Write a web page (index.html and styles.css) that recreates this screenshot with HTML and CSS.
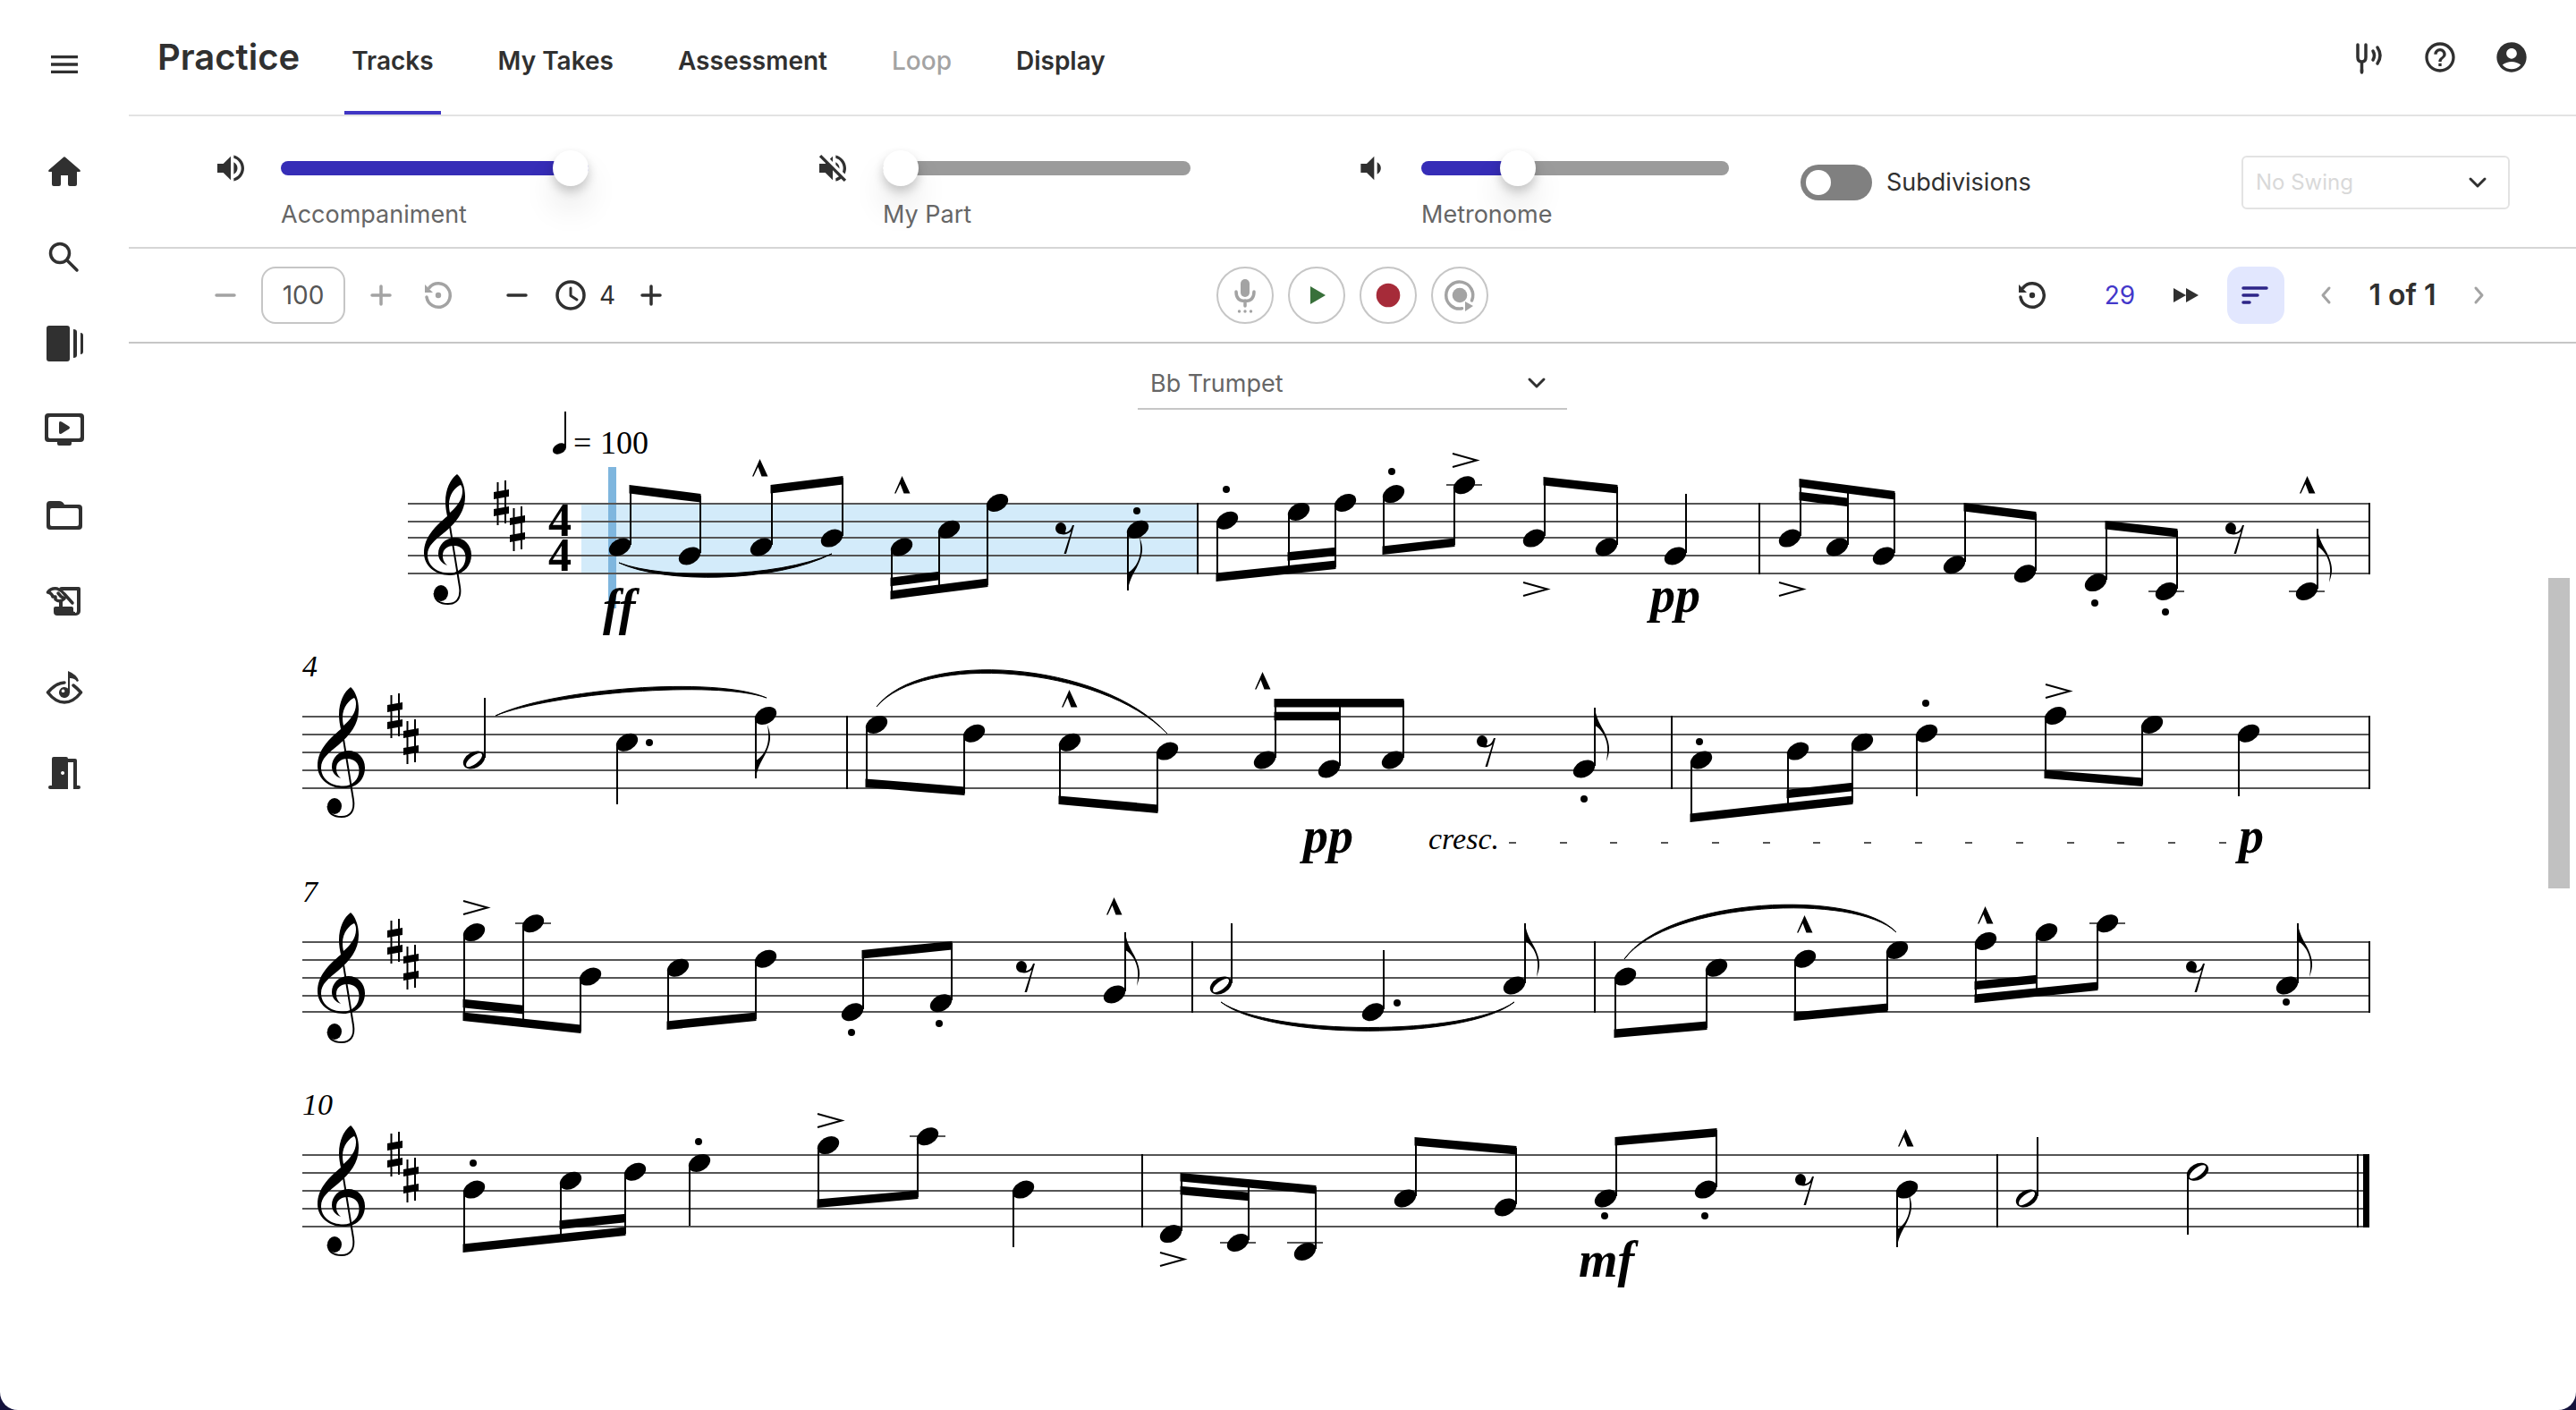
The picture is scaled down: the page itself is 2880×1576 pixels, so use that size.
FILE: index.html
```html
<!DOCTYPE html>
<html lang="en">
<head>
    <meta charset="UTF-8">
    <meta name="viewport" content="width=device-width, initial-scale=1.0">
    <title>Practice</title>
    <link rel="stylesheet" href="styles.css">
</head>
<body>
    <div class="app">
        <aside class="sidebar">
            <button class="icon-btn menu-btn" aria-label="Menu">
                <svg class="icon" viewBox="0 0 24 24"><path d="M3 18h18v-2H3v2zm0-5h18v-2H3v2zm0-7v2h18V6H3z"/></svg>
            </button>
            <nav class="side-nav">
                <a href="#" aria-label="Home">
                    <svg viewBox="0 0 48 48"><path d="M22.700 8Q24 6.500 25.300 8L41.500 22Q42.500 24 40.500 24H38V38Q38 40 36 40H30Q28 40 28 38V28H20V38Q20 40 18 40H12Q10 40 10 38V24H7.500Q5.500 24 6.500 22Z"/></svg>
                </a>
                <a href="#" aria-label="Search">
                    <svg viewBox="0 0 48 48" class="line"><circle cx="19" cy="19" r="10.500"/><path d="M27 27L38 38"/></svg>
                </a>
                <a href="#" aria-label="Library">
                    <svg viewBox="0 0 48 48"><rect x="4" y="4" width="26" height="40" rx="3"/><path d="M34 8q4 0 4 3v26q0 3-4 3zM42 12q3 0 3 3v18q0 3-3 3z"/></svg>
                </a>
                <a href="#" aria-label="Videos">
                    <svg viewBox="0 0 48 48"><path fill-rule="evenodd" d="M6 6H42a4 4 0 0 1 4 4V34a4 4 0 0 1-4 4H32v2a2 2 0 0 1-2 2H18a2 2 0 0 1-2-2V38H6a4 4 0 0 1-4-4V10a4 4 0 0 1 4-4zM8 10a2 2 0 0 0-2 2V32a2 2 0 0 0 2 2H40a2 2 0 0 0 2-2V12a2 2 0 0 0-2-2z"/><path d="M18 17Q18 14 21 15.500L29 20.500Q31 22 29 23.500L21 28.500Q18 30 18 27Z"/></svg>
                </a>
                <a href="#" aria-label="Folders">
                    <svg viewBox="0 0 48 48"><path fill-rule="evenodd" d="M8 8H18Q22 8 24 12H40a4 4 0 0 1 4 4V36a4 4 0 0 1-4 4H8a4 4 0 0 1-4-4V12a4 4 0 0 1 4-4zM10 16a2 2 0 0 0-2 2V34a2 2 0 0 0 2 2H38a2 2 0 0 0 2-2V18a2 2 0 0 0-2-2z"/></svg>
                </a>
                <a href="#" aria-label="Compose">
                    <svg viewBox="0 0 48 48"><path d="M14 30H32a2 2 0 0 1 2 2v3q0 1 2 1v4H16a4 4 0 0 1-4-4v-4a2 2 0 0 1 2-2zM18 22h4v9h-4zM18 11q0-3 3-3H40a2 2 0 0 1 2 2V35a5 5 0 0 1-5 5h-3v-3q4 1 4-2V12H22z"/><path class="line" stroke-width="3" d="M5.500 14Q9 9 16 10Q21 12 24 16L33 26M5.500 14Q10 15 11 19H14V22Q19 26 24 21L20 18.500L17 15"/></svg>
                </a>
                <a href="#" aria-label="Sight reading">
                    <svg viewBox="0 0 48 48"><path class="line" stroke-width="3" d="M24 19Q15 19 5.500 30Q14 41 24 41T42.500 30Q38 25 34 22"/><path fill-rule="evenodd" d="M28 6Q38 10 40 17L38 18Q36 14 30 14V30a6 6 0 1 1-2-4.500zM22.500 26.500a1.800 1.800 0 1 0 .1 0z"/></svg>
                </a>
                <a href="#" aria-label="Leave room">
                    <svg viewBox="0 0 48 48"><path fill-rule="evenodd" d="M12 6H26a2 2 0 0 1 2 2H36a2 2 0 0 1 2 2V38H40a2 2 0 0 1 0 4H34V12H28V42H8a2 2 0 0 1 0-4H10V8a2 2 0 0 1 2-2zM22 22a2 2 0 1 0 .1 0z"/></svg>
                </a>
            </nav>
        </aside>

        <main class="main">
            <header class="header">
                <h1>Practice</h1>
                <nav class="tabs">
                    <button class="tab active">Tracks</button>
                    <button class="tab">My Takes</button>
                    <button class="tab">Assessment</button>
                    <button class="tab" disabled>Loop</button>
                    <button class="tab">Display</button>
                </nav>
                <div class="header-actions">
                    <button class="icon-btn" aria-label="Tuner">
                        <svg class="icon" viewBox="0 0 40 40"><path class="line" stroke-width="3.500" d="M8 6V20Q8 25 12.500 25T17 20V6M12.500 26V37"/><path class="line" stroke-width="5" d="M12.500 34V36"/><path class="line" stroke-width="3" d="M25 13Q28 18 25 23M30 9Q36 18 30 27"/></svg>
                    </button>
                    <button class="icon-btn" aria-label="Help">
                        <svg class="icon" viewBox="0 0 24 24"><path d="M11 18h2v-2h-2v2zm1-16C6.480 2 2 6.480 2 12s4.480 10 10 10 10-4.480 10-10S17.520 2 12 2zm0 18c-4.410 0-8-3.590-8-8s3.590-8 8-8 8 3.590 8 8-3.590 8-8 8zm0-14c-2.210 0-4 1.790-4 4h2c0-1.100.9-2 2-2s2 .9 2 2c0 2-3 1.750-3 5h2c0-2.250 3-2.500 3-5 0-2.210-1.790-4-4-4z"/></svg>
                    </button>
                    <button class="icon-btn" aria-label="Account">
                        <svg class="icon" viewBox="0 0 24 24"><path d="M12 2C6.480 2 2 6.480 2 12s4.480 10 10 10 10-4.480 10-10S17.520 2 12 2zm0 4c1.930 0 3.500 1.570 3.500 3.500S13.930 13 12 13s-3.500-1.570-3.500-3.500S10.070 6 12 6zm0 14c-2.030 0-4.430-.82-6.140-2.880C7.550 15.800 9.680 15 12 15s4.450.8 6.140 2.120C16.430 19.180 14.030 20 12 20z"/></svg>
                    </button>
                </div>
            </header>

            <section class="mixer">
                <div class="track">
                    <svg class="icon" viewBox="0 0 24 24"><path d="M3 9v6h4l5 5V4L7 9H3zm13.500 3c0-1.770-1.020-3.290-2.500-4.030v8.050c1.480-.73 2.500-2.250 2.500-4.020zM14 3.230v2.060c2.890.86 5 3.540 5 6.710s-2.110 5.850-5 6.710v2.060c4.010-.91 7-4.490 7-8.770s-2.990-7.860-7-8.770z"/></svg>
                    <input type="range" id="accompaniment" min="0" max="100" value="100" style="--fill: 100%">
                    <label for="accompaniment">Accompaniment</label>
                </div>
                <div class="track">
                    <svg class="icon" viewBox="0 0 24 24"><path d="M4.340 2.930 2.930 4.340 7.290 8.700 7 9H3v6h4l5 5v-6.590l4.180 4.180c-.65.49-1.380.88-2.180 1.110v2.060c1.340-.3 2.570-.92 3.610-1.750l2.050 2.050 1.410-1.410L4.340 2.930zM19 12c0 .82-.15 1.610-.41 2.340l1.530 1.530c.56-1.170.88-2.480.88-3.870 0-4.280-2.990-7.860-7-8.770v2.060c2.890.86 5 3.540 5 6.710zm-7-8-1.880 1.880L12 7.760V4zm4.500 8c0-1.770-1.020-3.290-2.500-4.030v1.790l2.480 2.480c.01-.08.02-.16.02-.24z"/></svg>
                    <input type="range" id="my-part" min="0" max="100" value="0" style="--fill: 0%">
                    <label for="my-part">My Part</label>
                </div>
                <div class="track">
                    <svg class="icon" viewBox="0 0 24 24"><path d="M18.500 12c0-1.770-1.020-3.290-2.500-4.030v8.050c1.480-.73 2.500-2.250 2.500-4.020zM5 9v6h4l5 5V4L9 9H5z"/></svg>
                    <input type="range" id="metronome" min="0" max="100" value="29" style="--fill: 29%">
                    <label for="metronome">Metronome</label>
                </div>
                <div class="mixer-end">
                    <label class="switch">
                        <input type="checkbox">
                        Subdivisions
                    </label>
                    <div class="select-wrap swing">
                        <select aria-label="Swing" disabled>
                            <option>No Swing</option>
                        </select>
                        <svg class="chevron" viewBox="0 0 24 24"><path d="M4 8L12 16L20 8"/></svg>
                    </div>
                </div>
            </section>

            <section class="toolbar">
                <div class="tempo">
                    <button class="icon-btn muted" aria-label="Slower"><svg class="icon line" viewBox="0 0 40 40"><path d="M10 20H30"/></svg></button>
                    <input type="text" class="bpm" value="100" aria-label="Tempo">
                    <button class="icon-btn muted" aria-label="Faster"><svg class="icon line" viewBox="0 0 40 40"><path d="M10 20H30M20 10V30"/></svg></button>
                    <button class="icon-btn muted reset" aria-label="Reset tempo">
                        <svg class="icon" viewBox="0 0 40 40"><path class="line" d="M7 22A13.200 13.200 0 1 0 10 11.500"/><path d="M5 8V17H14Z"/><circle cx="20" cy="20" r="3.200"/></svg>
                    </button>
                    <div class="count-in">
                        <button class="icon-btn" aria-label="Less count-in"><svg class="icon line" viewBox="0 0 40 40"><path d="M10 20H30"/></svg></button>
                        <span class="count">
                            <svg class="icon line" viewBox="0 0 40 40"><circle cx="20" cy="20" r="15"/><path d="M20 12V20.500L27 25" stroke-width="3"/></svg>
                            4
                        </span>
                        <button class="icon-btn" aria-label="More count-in"><svg class="icon line" viewBox="0 0 40 40"><path d="M10 20H30M20 10V30"/></svg></button>
                    </div>
                </div>

                <div class="transport">
                    <button class="round muted" aria-label="Microphone">
                        <svg viewBox="0 0 64 64"><rect x="27" y="14" width="10" height="20" rx="5"/><path class="line" stroke-width="3" stroke-linecap="butt" d="M22 28Q22 38.500 32 38.500T42 28M32 38V44"/><circle cx="25.500" cy="50" r="1.700"/><circle cx="32" cy="50" r="1.700"/><circle cx="38.500" cy="50" r="1.700"/></svg>
                    </button>
                    <button class="round play" aria-label="Play">
                        <svg viewBox="0 0 64 64"><path d="M25 22V42L42 32Z"/></svg>
                    </button>
                    <button class="round record" aria-label="Record">
                        <svg viewBox="0 0 64 64"><circle cx="32" cy="32" r="13.300"/></svg>
                    </button>
                    <button class="round muted" aria-label="Play with recording">
                        <svg viewBox="0 0 64 64"><circle cx="32" cy="32" r="8.300"/><path class="line" stroke-width="3.500" stroke-linecap="butt" d="M45.500 38A15 15 0 1 0 34.500 46.800"/><path d="M38 39V50L47 44Z"/></svg>
                    </button>
                </div>

                <div class="position">
                    <button class="icon-btn restart" aria-label="Restart">
                        <svg class="icon" viewBox="0 0 40 40"><path class="line" d="M7 22A13.200 13.200 0 1 0 10 11.500"/><path d="M5 8V17H14Z"/><circle cx="20" cy="20" r="3.200"/></svg>
                    </button>
                    <span class="measure">29</span>
                    <button class="icon-btn" aria-label="Skip ahead">
                        <svg class="icon" viewBox="0 0 40 40"><path d="M6 12V28L20 20ZM20 12V28L34 20Z"/></svg>
                    </button>
                    <button class="view-btn" aria-label="Follow mode">
                        <svg class="icon line" viewBox="0 0 40 40"><path d="M6 12H32M6 20H22M6 28H13"/></svg>
                    </button>
                    <button class="icon-btn muted" aria-label="Previous page"><svg class="icon line" viewBox="0 0 40 40"><path stroke-width="3" d="M24 12L17 20L24 28"/></svg></button>
                    <span class="pages">1 of 1</span>
                    <button class="icon-btn muted" aria-label="Next page"><svg class="icon line" viewBox="0 0 40 40"><path stroke-width="3" d="M16 12L23 20L16 28"/></svg></button>
                </div>
            </section>

            <section class="sheet">
                <div class="select-wrap instrument">
                    <select aria-label="Instrument">
                        <option>Bb Trumpet</option>
                    </select>
                    <svg class="chevron" viewBox="0 0 24 24"><path d="M4 8L12 16L20 8"/></svg>
                </div>
                <svg class="score" id="score" viewBox="144 458 2736 1100"></svg>
            </section>
            <div class="scroll-thumb"></div>
        </main>
    </div>

    <script src="score.js"></script>
</body>
</html>
```

FILE: styles.css
```css
* {
    box-sizing: border-box;
}

body {
    margin: 0;
    background: #14123c;
    color: #303030;
    font-family: Inter, "Liberation Sans", sans-serif;
    font-size: 28px;
    line-height: 36px;
}

button,
input,
select {
    font: inherit;
    color: inherit;
}

button {
    padding: 0;
    border: none;
    background: none;
    cursor: pointer;
}

svg {
    display: block;
    fill: currentColor;
}

.icon {
    width: 40px;
    height: 40px;
    flex: none;
}

.line {
    fill: none;
    stroke: currentColor;
    stroke-width: 3.5px;
    stroke-linecap: round;
    stroke-linejoin: round;
}

.muted {
    color: #a3a3a3;
}

.app {
    display: flex;
    min-height: 100vh;
    background: #fff;
    border-radius: 0 0 20px 20px;
    overflow: hidden;
}

/* sidebar */

.sidebar {
    width: 144px;
    flex: none;
}

.menu-btn {
    display: flex;
    width: 100%;
    height: 144px;
    align-items: center;
    justify-content: center;
}

.side-nav a {
    display: flex;
    height: 96px;
    align-items: center;
    justify-content: center;
    color: inherit;
}

.side-nav svg {
    width: 48px;
    height: 48px;
}

.main {
    position: relative;
    flex: 1;
    min-width: 0;
}

/* header */

.header {
    display: flex;
    height: 130px;
    padding: 0 52px 0 32px;
    border-bottom: 2px solid #e3e3e3;
    align-items: center;
}

.header h1 {
    margin: 0 50px 0 0;
    font-size: 40px;
    line-height: 48px;
    font-weight: 600;
}

.tabs {
    display: flex;
    height: 100%;
    gap: 56px;
}

.tab {
    padding: 12px 8px 0;
    border-bottom: 4px solid transparent;
    font-weight: 600;
}

.tab.active {
    border-bottom-color: #4036c4;
}

.tab:disabled {
    color: #a3a3a3;
    font-weight: 500;
}

.header-actions {
    display: flex;
    gap: 40px;
    margin-left: auto;
}

/* mixer */

.mixer {
    display: grid;
    grid-template-columns: 673fr 602fr 500fr 793fr;
    height: 148px;
    padding: 0 74px 0 94px;
    border-bottom: 2px solid #d6d6d6;
    align-items: center;
}

.track {
    display: grid;
    grid-template-columns: 40px 344px;
    column-gap: 36px;
    row-gap: 14px;
    padding-top: 20px;
}

.track label {
    grid-column: 2;
    font-size: 27px;
    color: #666;
}

input[type="range"] {
    appearance: none;
    width: 100%;
    height: 40px;
    margin: 0;
    background: none;
}

input[type="range"]::-webkit-slider-runnable-track {
    height: 16px;
    border-radius: 8px;
    background: linear-gradient(to right, #362db7 var(--fill), #9b9b9b var(--fill));
}

input[type="range"]::-webkit-slider-thumb {
    appearance: none;
    width: 40px;
    height: 40px;
    margin-top: -12px;
    border-radius: 50%;
    background: #fff;
    box-shadow: 0 6px 12px rgba(0, 0, 0, 0.2), 0 24px 36px rgba(0, 0, 0, 0.1);
}

.mixer-end {
    display: flex;
    padding-top: 2px;
    align-items: center;
    justify-content: space-between;
}

.switch {
    display: flex;
    align-items: center;
    gap: 16px;
    font-size: 27px;
}

.switch input {
    appearance: none;
    width: 80px;
    height: 40px;
    margin: 0;
    padding: 6px;
    border-radius: 20px;
    background: #808080;
}

.switch input::before {
    content: "";
    display: block;
    width: 28px;
    height: 28px;
    border-radius: 50%;
    background: #fff;
}

.switch input:checked {
    background: #362db7;
}

.select-wrap {
    position: relative;
}

.select-wrap select {
    appearance: none;
    width: 100%;
    height: 60px;
    padding: 0 14px;
    border: none;
    background: none;
    opacity: 1;
}

.chevron {
    position: absolute;
    top: 18px;
    right: 22px;
    width: 24px;
    height: 24px;
    pointer-events: none;
}

.chevron path {
    fill: none;
    stroke: #303030;
    stroke-width: 3px;
    stroke-linecap: round;
    stroke-linejoin: round;
}

.swing {
    width: 300px;
}

.swing .chevron {
    right: 24px;
}

.swing select {
    border: 2px solid #e3e3e3;
    border-radius: 6px;
    font-size: 24px;
    color: #d9d9d9;
}

/* toolbar */

.toolbar {
    display: grid;
    grid-template-columns: 1fr auto 1fr;
    height: 106px;
    padding: 0 88px;
    border-bottom: 2px solid #c6c6c6;
    align-items: center;
}

.tempo,
.count-in,
.count,
.position {
    display: flex;
    align-items: center;
}

.tempo,
.count-in {
    gap: 20px;
}

.reset {
    margin-left: 4px;
}

.count-in {
    margin-left: 28px;
}

.count {
    gap: 12px;
}

.bpm {
    width: 94px;
    height: 64px;
    padding: 0;
    border: 2px solid #c6c6c6;
    border-radius: 16px;
    text-align: center;
    color: #555;
}

.transport {
    display: flex;
    gap: 16px;
}

.round {
    width: 64px;
    height: 64px;
    border: 2px solid #c6c6c6;
    border-radius: 50%;
}

.round svg {
    width: 64px;
    height: 64px;
    margin: -2px;
}

.play {
    color: #38703a;
}

.record {
    color: #a62b39;
}

.position {
    gap: 26px;
    justify-content: flex-end;
}

.restart {
    margin-right: 24px;
}

.measure {
    width: 56px;
    text-align: center;
    color: #4338ca;
}

.view-btn {
    width: 64px;
    height: 64px;
    padding: 12px;
    border-radius: 16px;
    background: #e2e7fe;
    color: #2d2588;
}

.pages {
    width: 80px;
    text-align: center;
    white-space: nowrap;
    font-size: 32px;
    font-weight: 600;
}

/* sheet music */

.sheet {
    padding-top: 14px;
}

.instrument {
    width: 480px;
    margin: 0 auto;
}

.instrument select {
    padding-top: 4px;
    border-bottom: 2px solid #c6c6c6;
    font-size: 27px;
    color: #666;
}

.score {
    width: 100%;
    height: auto;
    fill: #000;
    font-family: "Liberation Serif", "Times New Roman", serif;
}

.score .staff-line {
    fill: #555;
    shape-rendering: crispEdges;
}

.score .stem {
    shape-rendering: crispEdges;
}

.score .stroke {
    fill: none;
    stroke: #000;
    stroke-width: 2px;
}

.score .slur {
    stroke: #000;
    stroke-width: 1px;
    stroke-linejoin: round;
}

.score .current {
    fill: #d3ebfa;
}

.score .playhead {
    fill: #7fb6de;
}

.score .time {
    font-size: 52px;
    font-weight: bold;
}

.score .mark {
    font-size: 36px;
}

.score .number {
    font-size: 34px;
    font-style: italic;
}

.score .dynamic {
    font-size: 56px;
    font-style: italic;
    font-weight: bold;
}

.scroll-thumb {
    position: absolute;
    top: 646px;
    right: 7px;
    width: 24px;
    height: 347px;
    background: #c1c1c1;
}
```

FILE: score.js
```javascript
// Steps count down from the top staff line: 0 = F5, 4 = B4, 8 = E4
const STEP = 9.9;
const HEAD = 11.5;

const systems = [
    {
        lines: [563, 583, 601, 621, 641], x: 456, clef: 474, bars: [1339, 1967, 2649],
        beams: [
            { up: true, y: [542, 552], notes: [[693, 5], [771, 6]] },
            { up: true, y: [542, 532], notes: [[851, 5], [930, 4]] },
            { y: [670, 656], notes: [[1008, 5], [1061, 3], [1115, 0]], sub: [0, 1] },
            { y: [650, 636], notes: [[1372, 2], [1452, 1], [1504, 0]], sub: [1, 2] },
            { y: [620, 611], notes: [[1558, -1], [1637, -2]] },
            { up: true, y: [533, 542], notes: [[1715, 4], [1796, 5]] },
            { up: true, y: [535, 549], notes: [[2001, 4], [2054, 5], [2106, 6]], sub: [0, 1] },
            { up: true, y: [562, 572], notes: [[2185, 7], [2264, 8]] },
            { up: true, y: [582, 591], notes: [[2343, 9], [2422, 10]] }
        ],
        notes: [
            { x: 1272, s: 3, end: 660, flag: true },
            { x: 1873, s: 6, end: 552, up: true },
            { x: 2579, s: 10, end: 591, up: true, flag: true }
        ],
        rests: [1180, 2488],
        dots: [[1271, 571], [1371, 547], [1556, 527], [2342, 674], [2421, 684]],
        accents: [[1624, 507], [1703, 651], [1989, 651]],
        marcatos: [[841, 513], [1000, 532], [2571, 532]],
        slurs: [[692, 629, 742, 653, 868, 651, 930, 619]],
        dynamics: [["ff", 674, 698], ["pp", 1845, 684]]
    },
    {
        lines: [801, 821, 841, 861, 881], x: 338, clef: 355, number: 4, bars: [947, 1869, 2649],
        beams: [
            { y: [880, 889], notes: [[980, 1], [1089, 2]] },
            { y: [899, 909], notes: [[1196, 3], [1305, 4]] },
            { up: true, y: [781, 781], notes: [[1414, 5], [1486, 6], [1557, 5]], sub: [0, 1] },
            { y: [919, 899], notes: [[1902, 5], [2010, 4], [2082, 3]], sub: [1, 2] },
            { y: [870, 879], notes: [[2298, 0], [2406, 1]] }
        ],
        notes: [
            { x: 530, s: 5, end: 780, up: true, half: true },
            { x: 701, s: 3, end: 899 },
            { x: 856, s: 0, end: 870, flag: true },
            { x: 1771, s: 6, end: 791, up: true, flag: true },
            { x: 2154, s: 2, end: 890 },
            { x: 2514, s: 2, end: 890 }
        ],
        rests: [1651],
        dots: [[726, 830], [1771, 893], [1900, 829], [2153, 786]],
        accents: [[2287, 765]],
        marcatos: [[1187, 771], [1403, 751]],
        slurs: [[554, 800, 615, 770, 800, 755, 857, 780], [980, 790, 1030, 725, 1230, 738, 1305, 820]],
        dynamics: [["pp", 1457, 953], ["p", 2503, 953]]
    },
    {
        lines: [1053, 1073, 1093, 1113, 1131], x: 338, clef: 355, number: 7, bars: [1333, 1783, 2649],
        beams: [
            { y: [1141, 1155], notes: [[530, -1], [596, -2], [660, 4]], sub: [0, 1] },
            { y: [1151, 1141], notes: [[758, 3], [856, 2]] },
            { up: true, y: [1062, 1052], notes: [[953, 8], [1052, 7]] },
            { y: [1160, 1151], notes: [[1817, 4], [1919, 3]] },
            { y: [1141, 1131], notes: [[2018, 2], [2121, 1]] },
            { y: [1121, 1107], notes: [[2220, 0], [2288, -1], [2356, -2]], sub: [0, 1] }
        ],
        notes: [
            { x: 1246, s: 6, end: 1042, up: true, flag: true },
            { x: 1365, s: 5, end: 1032, up: true, half: true },
            { x: 1535, s: 8, end: 1062, up: true },
            { x: 1693, s: 5, end: 1032, up: true, flag: true },
            { x: 2557, s: 5, end: 1032, up: true, flag: true }
        ],
        rests: [1136, 2444],
        dots: [[952, 1154], [1050, 1144], [1562, 1121], [2556, 1120]],
        accents: [[518, 1007]],
        marcatos: [[1237, 1003], [2009, 1023], [2211, 1013]],
        slurs: [[1365, 1120, 1420, 1163, 1640, 1163, 1693, 1120], [1816, 1072, 1865, 1002, 2075, 993, 2120, 1042]],
        dynamics: []
    },
    {
        lines: [1291, 1311, 1331, 1351, 1371], x: 338, clef: 355, number: 10, bars: [1277, 2233, 2636],
        beams: [
            { y: [1400, 1381], notes: [[530, 4], [638, 3], [710, 2]], sub: [1, 2] },
            { y: [1350, 1340], notes: [[926, -1], [1037, -2]] },
            { up: true, y: [1311, 1325], notes: [[1309, 9], [1384, 10], [1459, 11]], sub: [0, 1] },
            { up: true, y: [1271, 1281], notes: [[1571, 5], [1683, 6]] },
            { up: true, y: [1271, 1261], notes: [[1795, 5], [1907, 4]] }
        ],
        notes: [
            { x: 782, s: 1, end: 1370 },
            { x: 1144, s: 4, end: 1394 },
            { x: 2132, s: 4, end: 1394, flag: true },
            { x: 2266, s: 5, end: 1271, up: true, half: true },
            { x: 2457, s: 2, end: 1380, half: true }
        ],
        rests: [2007],
        dots: [[529, 1300], [781, 1276], [1794, 1359], [1906, 1359]],
        accents: [[914, 1245], [1297, 1400]],
        marcatos: [[2122, 1262]],
        slurs: [],
        dynamics: [["mf", 1765, 1427]]
    }
];

const at = (x, y, body) => `<g transform="translate(${x} ${y})">${body}</g>`;
const rect = (x, y, w, h, cls) => `<rect class="${cls}" x="${x}" y="${y}" width="${w}" height="${h}"/>`;
const text = (x, y, cls, str) => `<text class="${cls}" x="${x}" y="${y}">${str}</text>`;

const CLEF = `<path fill-rule="evenodd" d="M37 0C30 5 24 16 24 31C24 37 25 42 26 47C13 58 0 70 0 88C0 102 12 113 29 113C43 113 53 104 53 90
    C53 79 45 71 34.500 71C24 71 16 79 16 89C16 95 20 100 26 102C22 98 21 95 21 91C21 84 26 80 33 80C41 80 46.500 85 46.500 93
    C46.500 103 39 110.500 29 110.500C14 110.500 4 102 4 90C4 80 12 74 23 65C36 54 46 42 46 25C46 14 42 4 37 0Z
    M41 12C36 14 28 22 28 34C28 38 28.500 40 29 43C36 37 43 29 43 19C43 15 42 13 41 12Z"/>
    <path class="stroke" d="M27 46L40 126C42 139 36 145 27 145C18 145 12 141 11.500 133"/>
    <ellipse cx="19" cy="133" rx="8" ry="9"/>`;
const SHARP = `<path d="M3.500 2h2v48h-2zM12 0h2v48h-2zM0 13L17 10V18L0 21ZM0 32L17 29V37L0 40Z"/>`;
const REST = `<path d="M12 6.500A6 6.500 0 1 0 6 13C10 14 14 13 17.500 10L9.500 35H12L21 3H19C17 9 14 11 11 11Z"/>`;
const FLAG = `<path d="M0 0C1 9 5 17 9 24C14 33 16.500 41 16 48C15.500 53 14 57 13 60C14 53 15 45 13 38C11 30 6 23 0 20Z"/>`;
const MARCATO = `<path d="M8.500 0L17.500 19.500H10.500L6.500 9L1.500 19.500H0Z"/>`;
const ACCENT = `<path class="stroke" d="M0 0L27 7.500L0 15"/>`;

function head(x, y, half) {
    const hole = half ? '<ellipse rx="11" ry="4.500" transform="rotate(-38)" fill="#fff"/>' : '';
    return at(x, y, `<ellipse rx="13" ry="8.900" transform="rotate(-29)"/>${hole}`);
}

function ledgers(x, s, top) {
    let out = '';
    for (let l = -2; l >= s; l -= 2) out += rect(x - 20, Math.round(top + l * STEP) - 1, 40, 2, 'staff-line');
    for (let l = 10; l <= s; l += 2) out += rect(x - 20, Math.round(top + l * STEP) - 1, 40, 2, 'staff-line');
    return out;
}

function stem(x, y1, y2) {
    return rect(Math.round(x) - 1, Math.min(y1, y2), 2, Math.abs(y2 - y1), 'stem');
}

function drawBeam(beam, top) {
    const dir = beam.up ? 1 : -1;
    const xs = beam.notes.map(n => n[0] + HEAD * dir);
    const first = xs[0], last = xs[xs.length - 1];
    const edge = x => beam.y[0] + (beam.y[1] - beam.y[0]) * (x - first) / (last - first);
    const bar = (a, b, shift) => {
        const ya = edge(a) + shift * dir, yb = edge(b) + shift * dir;
        return `<path d="M${a - 1} ${ya}L${b + 1} ${yb}V${yb + 9.6 * dir}L${a - 1} ${ya + 9.6 * dir}Z"/>`;
    };
    let out = bar(first, last, 0);
    if (beam.sub) out += bar(xs[beam.sub[0]], xs[beam.sub[1]], 14.7);
    beam.notes.forEach(([x, s], i) => {
        const y = top + s * STEP;
        out += ledgers(x, s, top) + head(x, y) + stem(xs[i], y - 3 * dir, edge(xs[i]) + 2 * dir);
    });
    return out;
}

function drawNote(n, top) {
    const dir = n.up ? 1 : -1;
    const x = Math.round(n.x + HEAD * dir);
    const y = top + n.s * STEP;
    let out = ledgers(n.x, n.s, top) + head(n.x, y, n.half) + stem(x, y - 3 * dir, n.end);
    if (n.flag) out += `<g transform="translate(${x} ${n.end}) scale(1 ${dir})">${FLAG}</g>`;
    return out;
}

function drawSlur([x1, y1, ax, ay, bx, by, x2, y2]) {
    const t = ay < y1 ? 5 : -5;
    return `<path class="slur" d="M${x1} ${y1}C${ax} ${ay} ${bx} ${by} ${x2} ${y2}C${bx} ${by + t} ${ax} ${ay + t} ${x1} ${y1}Z"/>`;
}

function drawSystem(sys) {
    const top = sys.lines[0] - 1;
    const bottom = sys.lines[4];
    let out = sys.lines.map(y => rect(sys.x, y - 1, 2649 - sys.x, 2, 'staff-line')).join('');
    out += at(sys.clef, top - 32, CLEF);
    out += at(sys.clef + 78, top - 25, SHARP) + at(sys.clef + 96, top + 4, SHARP);
    if (sys.number) out += text(338, top - 44, 'number', sys.number);
    out += sys.bars.map(x => rect(x - 1, top, 2, bottom - top + 1, 'stem')).join('');
    out += sys.beams.map(b => drawBeam(b, top)).join('');
    out += sys.notes.map(n => drawNote(n, top)).join('');
    out += sys.rests.map(x => at(x, top + 22, REST)).join('');
    out += sys.dots.map(([x, y]) => `<circle cx="${x}" cy="${y}" r="4"/>`).join('');
    out += sys.accents.map(([x, y]) => at(x, y, ACCENT)).join('');
    out += sys.marcatos.map(([x, y]) => at(x, y, MARCATO)).join('');
    out += sys.slurs.map(drawSlur).join('');
    out += sys.dynamics.map(([str, x, y]) => text(x, y, 'dynamic', str)).join('');
    return out;
}

let svg = rect(650, 563, 689, 78, 'current') + rect(680, 522, 9, 158, 'playhead');
svg += systems.map(drawSystem).join('');

// time signature and tempo mark
svg += text(613, 599, 'time', 4) + text(613, 638, 'time', 4);
svg += '<ellipse rx="8" ry="5.500" transform="translate(625.500 501.500) rotate(-29)"/>' + rect(631, 460, 2, 40, 'stem');
svg += text(641, 507, 'mark', '=') + text(671, 507, 'mark', '100');

// crescendo line
svg += text(1597, 949, 'number', 'cresc.');
for (let i = 0; i < 15; i++) svg += rect(Math.round(1687 + i * 56.7), 941, 8, 2, 'staff-line');

// final barline
svg += rect(2642, 1290, 7, 82, 'stem');

document.getElementById('score').innerHTML = svg;
```
